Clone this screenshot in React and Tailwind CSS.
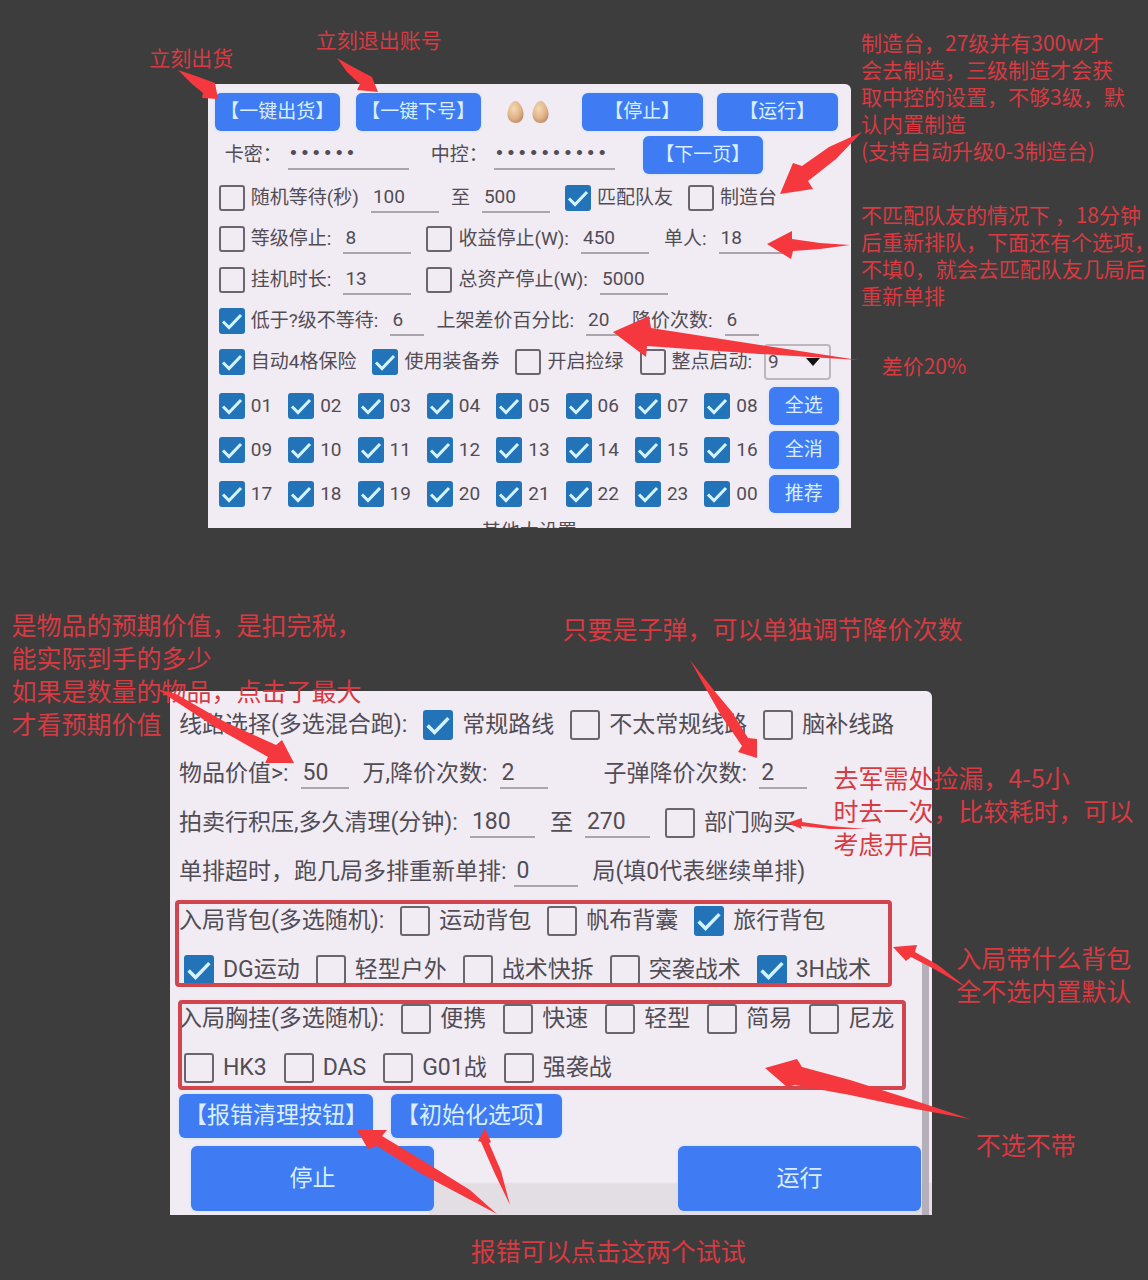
import React from "react";

const Check = ({ label, checked = false, large = false }) => {
  const size = large ? "size-[30px]" : "size-[26px]";

  return (
    <label
      className={`flex items-center whitespace-nowrap ${
        large ? "gap-[9px]" : "gap-[6px]"
      }`}
    >
      <span className="grid shrink-0">
        <input
          type="checkbox"
          defaultChecked={checked}
          className={`peer col-start-1 row-start-1 appearance-none rounded-[3px] border-2 border-[#6b666e] checked:border-[#2273b8] checked:bg-[#2273b8] ${size}`}
        />
        <svg
          viewBox="0 0 26 26"
          className={`pointer-events-none col-start-1 row-start-1 hidden peer-checked:block ${size}`}
          fill="none"
          stroke="#d3f3ff"
          strokeWidth="3"
        >
          <path d="M4 13.5 L10 19.5 L22 7" />
        </svg>
      </span>
      {label}
    </label>
  );
};

const Field = ({ label, value, width, gap = "gap-3" }) => (
  <label className={`flex items-center whitespace-nowrap ${gap}`}>
    {label}
    <input
      type="text"
      defaultValue={value}
      className={`h-[30px] border-b-2 border-[#aaa4ad] bg-transparent px-[2px] outline-none ${width}`}
    />
  </label>
);

const PasswordField = ({ label, value }) => (
  <label className="flex items-center gap-[6px] whitespace-nowrap">
    {label}
    <input
      type="password"
      defaultValue={value}
      className="h-[30px] w-[121px] border-b-2 border-[#aaa4ad] bg-transparent font-['Liberation_Mono',monospace] outline-none"
    />
  </label>
);

// tick box with a value box behind it
const CheckField = ({ label, value, width = "w-[68px]", checked }) => (
  <div className="flex items-center gap-3">
    <Check label={label} checked={checked} />
    <input
      type="text"
      aria-label={label}
      defaultValue={value}
      className={`h-[30px] border-b-2 border-[#aaa4ad] bg-transparent px-[2px] outline-none ${width}`}
    />
  </div>
);

const Button = ({ children, className }) => (
  <button
    type="button"
    className={`shrink-0 whitespace-nowrap rounded-md bg-[#3f7bf2] text-[#d9efff] shadow-[0_0_3px_#bfe4ff] ${className}`}
  >
    {children}
  </button>
);

const Egg = () => (
  <svg viewBox="0 0 17 24" className="h-6 w-[17px]">
    <defs>
      <radialGradient id="egg" cx="0.4" cy="0.35" r="0.7">
        <stop offset="0" stopColor="#f6d9b4" />
        <stop offset="0.6" stopColor="#e2b58a" />
        <stop offset="1" stopColor="#bb8f68" />
      </radialGradient>
    </defs>
    <path
      d="M8.500 1 C12.500 1 16.500 8.500 16.500 14 C16.500 20 13 23 8.500 23 C4 23 0.500 20 0.500 14 C0.500 8.500 4.500 1 8.500 1 Z"
      fill="url(#egg)"
    />
  </svg>
);

const hourRows = [
  { hours: ["01", "02", "03", "04", "05", "06", "07", "08"], action: "全选" },
  { hours: ["09", "10", "11", "12", "13", "14", "15", "16"], action: "全消" },
  { hours: ["17", "18", "19", "20", "21", "22", "23", "00"], action: "推荐" },
];

const MainPanel = () => (
  <section className="ml-[18.1%] h-[444px] w-[56%] overflow-hidden rounded-t-md bg-[#f1ebf4] pt-[7px] text-[19px] leading-6 text-[#514d54]">
    <div className="flex h-[42px] items-center justify-between pl-[7px] pr-[13px]">
      <div className="flex items-center gap-4">
        <Button className="h-[38px] w-[125px]">【一键出货】</Button>
        <Button className="h-[38px] w-[125px]">【一键下号】</Button>
        <span className="ml-[10px] flex gap-2">
          <Egg />
          <Egg />
        </span>
      </div>
      <div className="flex gap-[14px]">
        <Button className="h-[38px] w-[121px]">【停止】</Button>
        <Button className="h-[38px] w-[121px]">【运行】</Button>
      </div>
    </div>

    <div className="flex h-[44px] items-center gap-7 pl-[17px]">
      <div className="flex items-center gap-[22px]">
        <PasswordField label="卡密：" value="123456" />
        <PasswordField label="中控：" value="1234567890" />
      </div>
      <Button className="h-[38px] w-[120px]">【下一页】</Button>
    </div>

    <div className="flex h-[41px] items-center gap-[15px] pl-[11px]">
      <div className="flex items-center gap-3">
        <CheckField label="随机等待(秒)" value="100" />
        <Field label="至" value="500" width="w-[68px]" />
      </div>
      <Check label="匹配队友" checked />
      <Check label="制造台" />
    </div>

    <div className="flex h-[41px] items-center gap-[15px] pl-[11px]">
      <CheckField label="等级停止:" value="8" />
      <CheckField label="收益停止(W):" value="450" />
      <Field label="单人:" value="18" width="w-[68px]" />
    </div>

    <div className="flex h-[41px] items-center gap-[15px] pl-[11px]">
      <CheckField label="挂机时长:" value="13" />
      <CheckField label="总资产停止(W):" value="5000" />
    </div>

    <div className="flex h-[41px] items-center gap-3 pl-[11px]">
      <CheckField label="低于?级不等待:" value="6" width="w-[34px]" checked />
      <Field label="上架差价百分比:" value="20" width="w-[34px]" />
      <Field label="降价次数:" value="6" width="w-[34px]" />
    </div>

    <div className="flex h-[41px] items-center gap-4 pl-[11px]">
      <Check label="自动4格保险" checked />
      <Check label="使用装备券" checked />
      <Check label="开启捡绿" />
      <div className="flex items-center gap-3">
        <Check label="整点启动:" />
        <div className="grid items-center">
          <select
            aria-label="整点启动"
            defaultValue="9"
            className="col-start-1 row-start-1 h-[36px] w-[67px] appearance-none rounded-sm border-2 border-[#bcb6bf] bg-transparent px-[2px]"
          >
            <option value="9">9</option>
          </select>
          <svg
            viewBox="0 0 14 8"
            className="pointer-events-none col-start-1 row-start-1 mr-[11px] h-2 w-[14px] justify-self-end"
          >
            <path d="M0 0 H14 L7 8 Z" fill="#111" />
          </svg>
        </div>
      </div>
    </div>

    <div className="mt-[2px]">
      {hourRows.map((row) => (
        <div
          key={row.action}
          className="flex h-[44px] items-center gap-[11px] pl-[11px] pr-3"
        >
          <div className="flex flex-1 justify-between">
            {row.hours.map((hour) => (
              <Check key={hour} label={hour} checked />
            ))}
          </div>
          <Button className="h-[38px] w-[70px]">{row.action}</Button>
        </div>
      ))}
    </div>
    <p className="mt-1 text-center">其他大设置</p>
  </section>
);

const OptionPanel = () => (
  <section className="relative ml-[14.8%] mt-[163px] w-[66.4%] overflow-hidden rounded-t-md bg-[#f1ebf4] pt-[9px] text-[23px] leading-7 text-[#514d54]">
    <div className="flex h-[49px] items-center gap-4 pl-[9px]">
      <span className="whitespace-nowrap">线路选择(多选混合跑):</span>
      <Check large label="常规路线" checked />
      <Check large label="不太常规线路" />
      <Check large label="脑补线路" />
    </div>

    <div className="flex h-[49px] items-center gap-14 pl-[9px]">
      <div className="flex items-center gap-[14px]">
        <Field label="物品价值>:" value="50" width="w-[48px]" />
        <Field label="万,降价次数:" value="2" width="w-[48px]" />
      </div>
      <Field label="子弹降价次数:" value="2" width="w-[48px]" />
    </div>

    <div className="flex h-[49px] items-center gap-[15px] pl-[9px]">
      <Field
        label="拍卖行积压,多久清理(分钟):"
        value="180"
        width="w-[65px]"
      />
      <Field label="至" value="270" width="w-[65px]" />
      <Check large label="部门购买" />
    </div>

    <div className="flex h-[49px] items-center gap-[14px] pl-[9px]">
      <Field
        label="单排超时，跑几局多排重新单排:"
        value="0"
        width="w-[64px]"
        gap="gap-2"
      />
      <span className="whitespace-nowrap">局(填0代表继续单排)</span>
    </div>

    <div className="relative">
      <div className="flex h-[49px] items-center gap-4 pl-[9px]">
        <span className="whitespace-nowrap">入局背包(多选随机):</span>
        <Check large label="运动背包" />
        <Check large label="帆布背囊" />
        <Check large label="旅行背包" checked />
      </div>
      <div className="flex h-[49px] items-center gap-4 pl-[14px]">
        <Check large label="DG运动" checked />
        <Check large label="轻型户外" />
        <Check large label="战术快拆" />
        <Check large label="突袭战术" />
        <Check large label="3H战术" checked />
      </div>
      <span className="pointer-events-none absolute bottom-[7px] left-[5px] right-10 top-1 rounded-sm border-4 border-[#d2454f]" />
    </div>

    <div className="relative">
      <div className="flex h-[49px] items-center gap-[17px] pl-[9px]">
        <span className="whitespace-nowrap">入局胸挂(多选随机):</span>
        <Check large label="便携" />
        <Check large label="快速" />
        <Check large label="轻型" />
        <Check large label="简易" />
        <Check large label="尼龙" />
      </div>
      <div className="flex h-[49px] items-center gap-[17px] pl-[14px]">
        <Check large label="HK3" />
        <Check large label="DAS" />
        <Check large label="G01战" />
        <Check large label="强袭战" />
      </div>
      <span className="pointer-events-none absolute bottom-[2px] left-2 right-[26px] top-[6px] rounded-sm border-4 border-[#d2454f]" />
    </div>

    <div className="mt-[2px] flex gap-[18px] pl-[9px]">
      <Button className="h-[44px] w-[194px]">【报错清理按钮】</Button>
      <Button className="h-[44px] w-[171px]">【初始化选项】</Button>
    </div>

    <div className="mt-2 flex justify-between bg-[linear-gradient(#f1ebf4_36px,#e3dde4_38px)] bg-[length:66%_100%] bg-right bg-no-repeat pb-1 pl-[21px] pr-[11px]">
      <Button className="h-[65px] w-1/3">停止</Button>
      <Button className="h-[65px] w-1/3">运行</Button>
    </div>

    {/* scrollbar thumb */}
    <span className="absolute bottom-0 right-[3px] h-[255px] w-[7px] rounded-t-sm bg-[#b4afb8]" />
  </section>
);

const notes = [
  { place: "left-[13%] top-[44px]", lines: ["立刻出货"] },
  { place: "left-[27.5%] top-[26px]", lines: ["立刻退出账号"] },
  {
    place: "left-[75%] top-[29px]",
    lines: [
      "制造台，27级并有300w才",
      "会去制造，三级制造才会获",
      "取中控的设置，不够3级，默",
      "认内置制造",
      "(支持自动升级0-3制造台)",
    ],
  },
  {
    place: "left-[75%] top-[201px]",
    lines: [
      "不匹配队友的情况下 ，18分钟",
      "后重新排队，下面还有个选项，",
      "不填0，就会去匹配队友几局后",
      "重新单排",
    ],
  },
  { place: "left-[76.8%] top-[352px]", lines: ["差价20%"] },
  {
    large: true,
    place: "left-[1%] top-[608px]",
    lines: [
      "是物品的预期价值，是扣完税，",
      "能实际到手的多少",
      "如果是数量的物品，点击了最大",
      "才看预期价值",
    ],
  },
  {
    large: true,
    place: "left-[49%] top-[612px]",
    lines: ["只要是子弹，可以单独调节降价次数"],
  },
  {
    large: true,
    place: "left-[72.6%] top-[761px]",
    lines: ["去军需处捡漏，4-5小", "时去一次，比较耗时，可以", "考虑开启"],
  },
  {
    large: true,
    place: "left-[83.3%] top-[941px]",
    lines: ["入局带什么背包", "全不选内置默认"],
  },
  { large: true, place: "left-[85%] top-[1128px]", lines: ["不选不带"] },
  {
    large: true,
    place: "left-[41%] top-[1234px]",
    lines: ["报错可以点击这两个试试"],
  },
];

const arrows = [
  "178,70 196,76 215,83 218,99 202,98 203,93 192,84",
  "337,58 353,67 372,77 378,92 357,90 360,84 347,72",
  "862,132 829,147 802,166 793,163 780,194 813,189 808,181 836,159",
  "767,244 792,231 792,239 820,243 850,245 820,249 793,251 791,259",
  "613,332 649,316 651,328 760,345 858,360 760,354 647,346 646,357",
  "157,689 176,694 225,722 276,745 282,740 294,763 265,763 268,757 215,727 172,699",
  "690,660 712,688 732,712 748,738 757,739 757,758 738,752 742,746 722,717 706,689",
  "787,823 802,818 802,822 830,826 866,829 830,829 801,826 802,829",
  "893,947 917,945 915,952 938,965 967,988 936,970 911,957 906,961",
  "765,1068 797,1059 802,1067 850,1080 910,1099 970,1119 910,1108 850,1095 795,1085 787,1087",
  "357,1130 387,1130 382,1136 425,1162 470,1190 497,1214 465,1197 420,1173 377,1146 368,1149",
  "485,1128 491,1142 489,1143 501,1171 510,1205 495,1174 481,1142 478,1141",
];

export default function App() {
  return (
    <main className="relative overflow-hidden bg-[#3d3d3d] pb-[65px] pt-[84px] font-['Roboto','Noto_Sans_CJK_SC',sans-serif]">
      <MainPanel />
      <OptionPanel />

      {notes.map((note) => (
        <p
          key={note.place}
          className={`pointer-events-none absolute whitespace-nowrap font-['Noto_Sans_CJK_SC',sans-serif] text-[#d83a42] ${
            note.large ? "text-[25px] leading-[33px]" : "text-[21px] leading-[27px]"
          } ${note.place}`}
        >
          {note.lines.map((line) => (
            <span key={line} className="block">
              {line}
            </span>
          ))}
        </p>
      ))}

      <svg
        viewBox="0 0 1148 1280"
        preserveAspectRatio="none"
        className="pointer-events-none absolute inset-0 size-full"
        fill="#f4383d"
      >
        {arrows.map((points) => (
          <polygon key={points} points={points} />
        ))}
      </svg>
    </main>
  );
}
